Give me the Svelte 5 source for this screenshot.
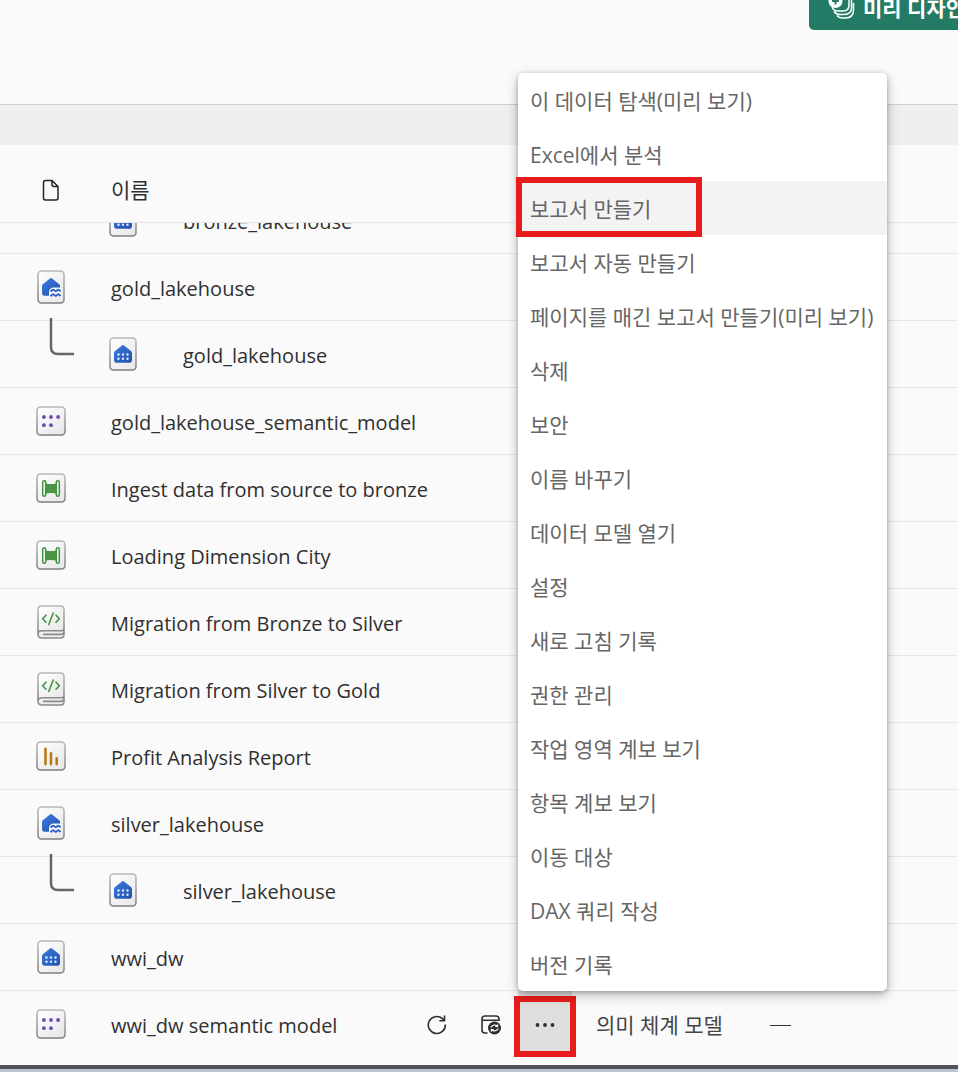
<script>
  const menuItems = [
    '이 데이터 탐색(미리 보기)',
    'Excel에서 분석',
    '보고서 만들기',
    '보고서 자동 만들기',
    '페이지를 매긴 보고서 만들기(미리 보기)',
    '삭제',
    '보안',
    '이름 바꾸기',
    '데이터 모델 열기',
    '설정',
    '새로 고침 기록',
    '권한 관리',
    '작업 영역 계보 보기',
    '항목 계보 보기',
    '이동 대상',
    'DAX 쿼리 작성',
    '버전 기록'
  ];
  const activeItem = 2;

  const rows = [
    { name: 'bronze_lakehouse', icon: 'endpoint', child: true, clipped: true },
    { name: 'gold_lakehouse', icon: 'lakehouse' },
    { name: 'gold_lakehouse', icon: 'endpoint', child: true },
    { name: 'gold_lakehouse_semantic_model', icon: 'model' },
    { name: 'Ingest data from source to bronze', icon: 'pipeline' },
    { name: 'Loading Dimension City', icon: 'pipeline' },
    { name: 'Migration from Bronze to Silver', icon: 'notebook' },
    { name: 'Migration from Silver to Gold', icon: 'notebook' },
    { name: 'Profit Analysis Report', icon: 'report' },
    { name: 'silver_lakehouse', icon: 'lakehouse' },
    { name: 'silver_lakehouse', icon: 'endpoint', child: true },
    { name: 'wwi_dw', icon: 'endpoint' },
    { name: 'wwi_dw semantic model', icon: 'model', type: '의미 체계 모델', open: true }
  ];
</script>

{#snippet itemIcon(kind)}
  <svg class="item-icon" viewBox="0 0 30 34" aria-hidden="true">
    {#if kind === 'lakehouse' || kind === 'endpoint'}
      <rect x="2" y="1" width="26" height="32" rx="3.5" fill="url(#paper)" stroke="url(#edge)" stroke-width="1.5" />
      <path d="M14 8.400a1.600 1.600 0 0 1 2 0l7.200 5.800c.6.5.8 1 .8 1.700v7c0 1.700-1.100 2.900-2.800 2.900H8.800C7.100 25.800 6 24.600 6 22.900v-7c0-.7.2-1.200.8-1.700z" fill="url(#blue)" />
      {#if kind === 'lakehouse'}
        <path d="M13 26.500V21.500Q14 17.500 17.500 17.500H25V27H13z" fill="#f6f6f6" />
        <path d="M14.600 21.600l1.700-1.600q.8-.7 1.600 0l1 .900q.8.700 1.600 0l1-.900q.8-.7 1.600 0l1.400 1.400M14.600 26.200l1.700-1.600q.8-.7 1.600 0l1 .9q.8.700 1.600 0l1-.9q.8-.7 1.600 0l1.400 1.400" fill="none" stroke="#2a62c4" stroke-width="1.900" />
      {:else}
        <g fill="#dcebff">
          <circle cx="10.500" cy="17.500" r="1.200" /><circle cx="15" cy="17.500" r="1.200" /><circle cx="19.500" cy="17.500" r="1.200" />
          <circle cx="10.500" cy="21.800" r="1.200" /><circle cx="15" cy="21.800" r="1.200" /><circle cx="19.500" cy="21.800" r="1.200" />
        </g>
      {/if}
    {:else if kind === 'notebook'}
      <path d="M2 29V4.500Q2 1 5.500 1h19Q28 1 28 4.500V25" fill="url(#paper)" stroke="url(#edge)" stroke-width="1.500" />
      <path d="M28 23.500q0 2.200-2.500 2.200H6q-4 0-4 3.600T6 33h18.500Q28 33 28 29.500z" fill="#eeeeee" stroke="#8b8b8b" stroke-width="1.500" />
      <path d="M28 27q-.5 2.400-3 2.400H7" fill="none" stroke="#8b8b8b" stroke-width="1.600" />
      <path d="M10 10.200L6.700 13.700 10 17.200M20 10.200l3.300 3.500-3.300 3.500M17.200 8L12.800 19.500" fill="none" stroke="#429640" stroke-width="1.600" stroke-linecap="round" />
    {:else}
      <rect x="1" y="3" width="28" height="28" rx="3.500" fill="url(#paper)" stroke="url(#edge)" stroke-width="1.500" />
      {#if kind === 'model'}
        <g fill="#6b48b3">
          <circle cx="7.900" cy="13" r="1.900" /><circle cx="15" cy="13" r="1.900" /><circle cx="22.100" cy="13" r="1.900" />
          <circle cx="7.900" cy="21.200" r="1.900" /><circle cx="15" cy="21.200" r="1.900" />
        </g>
      {:else if kind === 'pipeline'}
        <path d="M9.500 12.500Q15 13.700 20.500 12.500v10Q15 21.300 9.500 22.500z" fill="#4a9646" />
        <rect x="6.700" y="9.800" width="3" height="15.400" rx="1.500" fill="#fafafa" stroke="#3f9440" stroke-width="1.500" />
        <rect x="20.300" y="9.800" width="3" height="15.400" rx="1.500" fill="#fafafa" stroke="#3f9440" stroke-width="1.500" />
      {:else}
        <path d="M9.500 9.700v15.400M15 14.200v10.900M20.700 19.200v5.900" fill="none" stroke="#b9781a" stroke-width="2.600" stroke-linecap="round" />
      {/if}
    {/if}
  </svg>
{/snippet}

<svg class="defs" aria-hidden="true">
  <defs>
    <linearGradient id="paper" x1="0" y1="0" x2="1" y2="1"><stop stop-color="#ffffff" /><stop offset="1" stop-color="#e6e6e6" /></linearGradient>
    <linearGradient id="edge" x1="0" y1="0" x2="0" y2="1"><stop stop-color="#b8b8b8" /><stop offset="1" stop-color="#808080" /></linearGradient>
    <linearGradient id="blue" x1="0" y1="0" x2="1" y2="1"><stop stop-color="#3b7ae0" /><stop offset="1" stop-color="#2252ad" /></linearGradient>
  </defs>
</svg>

<main>
  <header>
    <button class="flow">
      <svg width="28" height="28" viewBox="0 0 28 28" fill="none" stroke="#fff" stroke-width="1.500" aria-hidden="true">
        <path d="M5 13q1.500 4 6 4h5q6 0 6-6V3M7 17.500q2 3 6 3h4q7.500 0 7.500-7V6M10 21.500q2 2.500 5 2.500h3q8.500 0 8.500-8V9" />
        <circle cx="8.500" cy="7" r="7" fill="#fff" stroke="none" />
        <path d="M8.500 3v7.500M5 7h7" stroke="#237b66" stroke-width="2" />
      </svg>
      <span>미리 디자인</span>
    </button>
  </header>
  <div class="strip"></div>

  <table>
    <colgroup><col class="c-icon" /><col class="c-name" /><col class="c-type" /><col /></colgroup>
    <thead>
      <tr>
        <th scope="col" aria-label="아이콘">
          <svg class="file" width="18" height="24" viewBox="0 0 18 24" fill="none" stroke="#242424" stroke-width="1.500" aria-hidden="true">
            <path d="M3.500 2.500H10l6 6v11.500q0 2-2 2H3.500q-2 0-2-2V4.500q0-2 2-2zM10 2.500v4q0 2 2 2h4" />
          </svg>
        </th>
        <th scope="col">이름</th>
        <th></th>
        <th></th>
      </tr>
    </thead>
    <tbody>
      {#each rows as row}
        <tr class:clipped={row.clipped} class:open={row.open}>
          <td class="lead">
            {#if !row.child}
              {@render itemIcon(row.icon)}
            {:else if !row.clipped}
              <svg class="elbow" width="26" height="38" viewBox="0 0 26 38" aria-hidden="true">
                <path d="M2 0V29q0 7 7 7H25" fill="none" stroke="#666" stroke-width="2.500" />
              </svg>
            {/if}
          </td>
          <td>
            <div class="name">
              {#if row.child}
                <span class="child-icon">{@render itemIcon(row.icon)}</span>
              {/if}
              <a href="#item">{row.name}</a>
              {#if row.open}
                <div class="actions">
                  <button class="tool" aria-label="새로 고침">
                    <svg width="22" height="22" viewBox="0 0 22 22" fill="none" stroke="#303030" stroke-width="1.600" aria-hidden="true">
                      <path d="M19.300 10.500A8.500 8.500 0 1 1 16.500 4.700L18.300 6.500M18.500 1.500V6.700H13.300" />
                    </svg>
                  </button>
                  <button class="tool" aria-label="새로 고침 예약">
                    <svg width="22" height="22" viewBox="0 0 22 22" fill="none" stroke="#303030" stroke-width="1.600" aria-hidden="true">
                      <path d="M7.500 19H5q-3 0-3-3V5q0-3 3-3h11q3 0 3 3v2M2 6.300H19" />
                      <circle cx="14.500" cy="14" r="6.500" fill="#303030" stroke="none" />
                      <path d="M10.800 13.300q3.200-4 6.800-1v-1.800M17.600 12.300h-2.300M18.200 14.700q-3.200 4-6.800 1v1.800M11.400 15.700h2.300" stroke="#fff" stroke-width="1.200" />
                    </svg>
                  </button>
                  <div class="anchor">
                    <button class="more" aria-label="추가 옵션">
                      <svg width="22" height="6" viewBox="0 0 22 6" fill="#303030" aria-hidden="true">
                        <circle cx="3.500" cy="3" r="1.900" /><circle cx="11" cy="3" r="1.900" /><circle cx="18.500" cy="3" r="1.900" />
                      </svg>
                    </button>
                    <span class="mark mark-more"></span>
                    <div class="menu" role="menu">
                      {#each menuItems as label, i}
                        <button role="menuitem" class:active={i === activeItem}>
                          {label}
                          {#if i === activeItem}<span class="mark mark-item"></span>{/if}
                        </button>
                      {/each}
                    </div>
                  </div>
                </div>
              {/if}
            </div>
          </td>
          <td class="info">{row.type ?? ''}</td>
          <td class="info">{#if row.open}<span class="dash"></span>{/if}</td>
        </tr>
      {/each}
    </tbody>
  </table>
  <footer></footer>
</main>

<style>
  :global(body) { background: #fafafa; }
  main {
    font-family: "Open Sans", "Noto Sans CJK KR", sans-serif;
    font-size: 20px;
    line-height: 28px;
    color: #303030;
    background: #fafafa;
    overflow: hidden;
  }
  button { font: inherit; border: 0; margin: 0; background: none; color: inherit; }
  svg { display: block; flex: none; }
  .defs { position: absolute; width: 0; height: 0; }

  header {
    display: flex;
    justify-content: flex-end;
    align-items: flex-start;
    height: 104px;
    overflow: hidden;
    border-bottom: 1px solid #d0d0d0;
  }
  .flow {
    display: flex;
    align-items: center;
    gap: 8px;
    width: 192px;
    height: 44px;
    margin: -14px -43px 0 0;
    padding: 0 18px;
    border-radius: 5px;
    background: #237b66;
    color: #fff;
    font-weight: 700;
    font-size: 21px;
    white-space: nowrap;
  }
  .strip { height: 40px; background: #efefef; }

  table { width: 100%; table-layout: fixed; border-collapse: separate; border-spacing: 0; }
  .c-icon { width: 111px; }
  .c-name { width: 461px; }
  .c-type { width: 174px; }
  th, td { padding: 0; border-bottom: 1px solid #e6e6e6; text-align: left; }
  th { height: 65px; padding-top: 12px; font-weight: 400; font-size: 21px; }
  .file { margin-left: 42px; }
  td { height: 66px; }
  .lead { position: relative; }
  .item-icon { width: 30px; height: 34px; }
  .lead .item-icon { margin-left: 36px; }
  .elbow { position: absolute; left: 49px; top: -3px; }
  .name { display: flex; align-items: center; height: 66px; }
  .child-icon { width: 72px; }
  .child-icon .item-icon { margin-left: -3px; }
  a { color: inherit; text-decoration: none; white-space: nowrap; padding-top: 4px; }

  .clipped td { height: 30px; }
  .clipped .name { height: 30px; clip-path: inset(0 -4px); align-items: flex-end; }
  .clipped .child-icon { padding-bottom: 16px; }
  .clipped a { padding-bottom: 17px; }

  .open td { border-bottom: 0; padding-bottom: 8px; }
  .actions { display: flex; align-items: center; margin-left: auto; }
  .tool { width: 54px; padding: 2px 16px 0; }
  .anchor { position: relative; }
  .more {
    display: flex;
    align-items: center;
    justify-content: center;
    width: 54px;
    height: 66px;
    padding: 2px 0 0;
    background: #e1dfdd;
  }
  td.info { height: 64px; padding-top: 2px; padding-left: 24px; white-space: nowrap; color: #444; font-size: 21px; }
  .clipped td.info { height: 28px; }
  .dash { display: block; width: 21px; height: 1px; background: #333; }

  .menu {
    position: absolute;
    left: 0;
    bottom: 100%;
    z-index: 1;
    width: 369px;
    border-radius: 5px;
    background: #fff;
    box-shadow: 0 4px 12px rgba(0, 0, 0, 0.28), 0 1px 4px rgba(0, 0, 0, 0.22);
  }
  .menu button {
    display: block;
    position: relative;
    width: 100%;
    height: 54px;
    padding: 2px 12px 0;
    text-align: left;
    white-space: nowrap;
    color: #666;
    font-size: 21px;
  }
  .menu .active { background: #f3f3f3; }
  .mark { position: absolute; box-sizing: border-box; border: 6px solid #e81c1c; pointer-events: none; }
  .mark-item { left: -2px; top: -4px; width: 186px; height: 60px; }
  .mark-more { left: -4px; top: 5px; width: 62px; height: 61px; }

  footer { height: 4px; background: #525459; border-bottom: 3px solid #b9c5d2; }
</style>
